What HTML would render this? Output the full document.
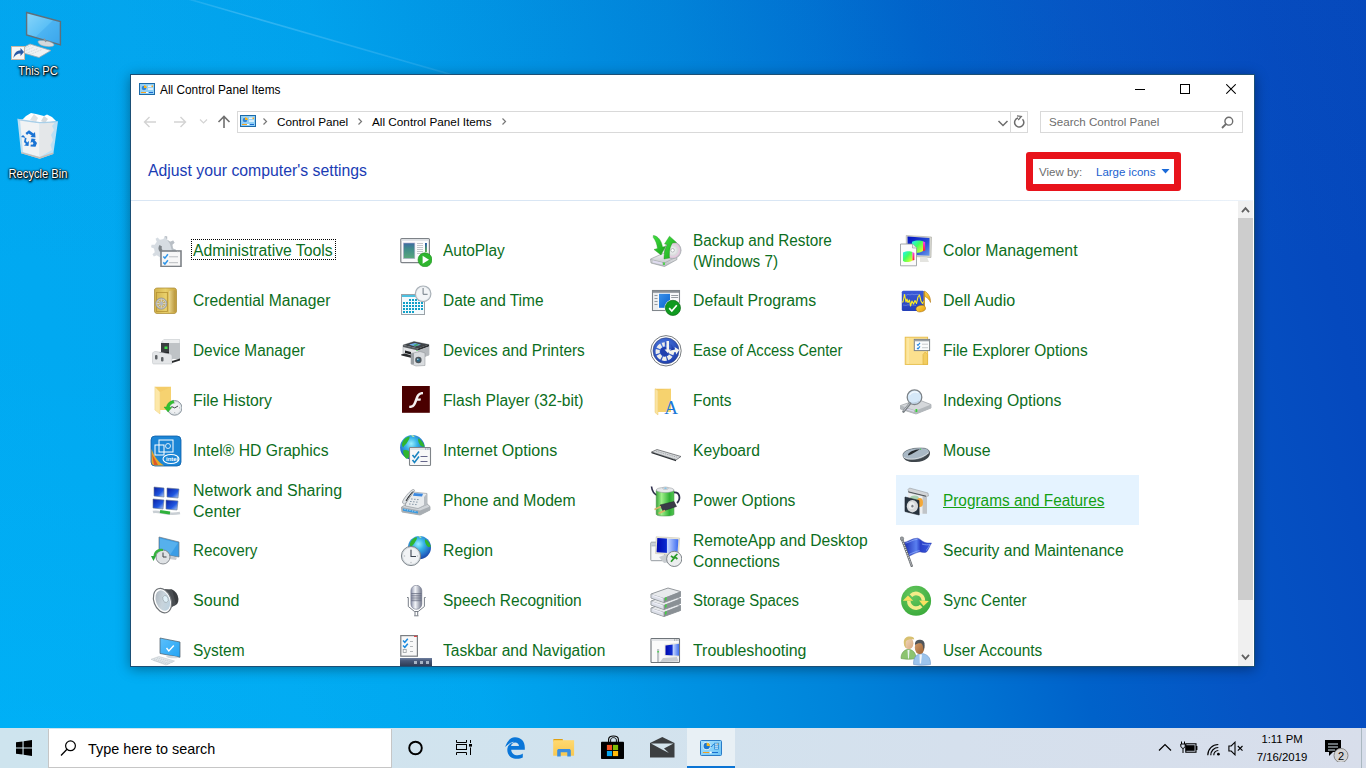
<!DOCTYPE html><html><head><meta charset="utf-8"><title>All Control Panel Items</title><style>
*{margin:0;padding:0;box-sizing:border-box}
html,body{width:1366px;height:768px;overflow:hidden}
body{position:relative;font-family:"Liberation Sans", sans-serif;background:#0a78d8}
.a{position:absolute;display:block}
.t{position:absolute;white-space:nowrap}
#bg{position:absolute;left:0;top:0;width:1366px;height:768px;
background:radial-gradient(ellipse 700px 420px at 0% 100%, rgba(0,190,255,0.32), rgba(0,190,255,0) 100%),linear-gradient(180deg, rgba(20,120,200,0.06) 0%, rgba(20,120,200,0) 35%),linear-gradient(76deg,#00aaf2 0%,#02a8f0 20%,#00a4ee 32%,#0094e4 44%,#0084da 55%,#0072d2 64%,#0062ca 71%,#0554c4 81%,#0549be 93%,#0546bb 100%);}
.dl{position:absolute;text-align:center;color:#fff;font-size:12px;line-height:14px;transform:scaleX(0.93);text-shadow:0 0 1px #000,0 0 2px #000,1px 1px 2px #000,0 1px 3px #000}
#win{position:absolute;left:130px;top:74px;width:1125px;height:593px;background:#fff;border:1px solid #1b4f76;box-shadow:0 2px 12px rgba(0,0,0,.38)}
#clip{position:absolute;left:131px;top:201px;width:1106px;height:465px;overflow:hidden}
.it{position:absolute;width:243px;height:50px}
.lb{position:absolute;left:46.5px;white-space:nowrap;font-size:16px;line-height:21px;color:#0c6e21;transform-origin:0 0}
#tb{position:absolute;left:0;top:728px;width:1366px;height:40px;background:linear-gradient(90deg,#cee4ee 0%,#d2e3ee 45%,#d5e0ed 70%,#d8deeb 100%)}
</style></head><body>
<div id="bg"></div>
<svg class="a" style="left:0;top:0" width="700" height="100"><defs><linearGradient id="bm" x1="0" y1="0" x2="1" y2="0"><stop offset="0" stop-color="#fff" stop-opacity="0"/><stop offset="0.3" stop-color="#bfe8ff" stop-opacity="0.25"/><stop offset="1" stop-color="#bfe8ff" stop-opacity="0.1"/></linearGradient></defs><path d="M150 -12 L470 80" stroke="url(#bm)" stroke-width="1.6"/></svg>
<svg class="a" style="left:8px;top:8px" width="56" height="56" viewBox="0 0 56 56">
<defs><linearGradient id="scr" x1="0" y1="0" x2="1" y2="1"><stop offset="0" stop-color="#8ad6fa"/><stop offset="0.5" stop-color="#5cc0f6"/><stop offset="0.52" stop-color="#4cb4f2"/><stop offset="1" stop-color="#3aa6ec"/></linearGradient></defs>
<polygon points="18.6,4.5 52.4,13.5 52.4,36.8 18.6,27" fill="url(#scr)" stroke="#5f6f7a" stroke-width="1.4"/>
<path d="M30 33.5 C30 31 46 33 46 37 C46 40 30 39 30 33.5z" fill="#d4d9dd" stroke="#9aa3aa" stroke-width="0.6"/>
<path d="M36 30.5 L38 34" stroke="#8a949b" stroke-width="1.5"/>
<polygon points="8.5,43 22,36 43,42.5 31,49.5" fill="#eef1f3" stroke="#9ea7ad" stroke-width="0.8"/>
<path d="M12 42.5 L23 37.5 M14.5 44 L26 39 M18 45.5 L30 40.5 M22 46.5 L34 41.5" stroke="#c2c9ce" stroke-width="0.7" stroke-dasharray="1 0.8"/>
<rect x="3.5" y="38.5" width="13" height="13" fill="#f6f6f6" stroke="#c8b8a8"/>
<path d="M5.5 50 C6 45 8.5 42.5 12.5 42.5 L12.5 40 L16 44 L12.5 48 L12.5 45.5 C9.5 45.5 7 47 5.5 50Z" fill="#2a5aa6"/>
</svg>
<svg class="a" style="left:14px;top:110px" width="48" height="52" viewBox="0 0 48 52">
<polygon points="3.4,8.8 25.7,12 44,11.2 39.3,44 25.7,48.7 7.1,43.3" fill="#cfe6f4" opacity="0.9"/>
<polygon points="6,10 25.7,13 25.7,47 9,42" fill="#f1f3f4"/>
<polygon points="25.7,13 41,12.5 38,16 40,20 37,25 39,30 36.5,35 38,40 25.7,47" fill="#e4e7e9"/>
<polygon points="12,6 17,3 22,4 30,6 33,4.5 38,7 42,11 30,13 25,14 18,12 8,10" fill="#ffffff"/>
<polygon points="20,4 24,8 22,12 16,10" fill="#dfe2e4"/>
<polygon points="30,6 34,9 31,13 27,11" fill="#d5d9dc"/>
<polygon points="3.4,8.8 25.7,12 44,11.2 41,12.5 25.7,13.5 5.5,10.5" fill="#a9cfe8"/>
<polygon points="7.1,42 25.7,47 39.3,42.5 39.3,44 25.7,48.7 7.1,43.3" fill="#c8bdb5"/>
<g fill="#1a74d4">
<path d="M11.5 23 L15 20.3 L19.5 23.5 L21 22 L21.5 27.5 L16.5 27 L17.8 25.6 L14.6 23.5 L13 25z"/>
<path d="M8 27 L10 25 L12 27 L11 32 L13 34 L11 35.5 L15.5 36 L16 31 L14.2 32.5 L13 31 L13.5 28z" transform="translate(-1 0)"/>
<path d="M16.5 36.5 L21.5 36.8 L23 33 L20.5 30 L22 29 L17.5 28.5 L16.5 33 L18.2 31.8 L19.5 33.3 L18.5 34.7 L16.8 34.5z"/>
</g>
</svg>
<div class="dl" style="left:0px;top:64px;width:76px">This PC</div>
<div class="dl" style="left:-2px;top:167px;width:80px">Recycle Bin</div>
<div id="win"></div>
<svg class="a" style="left:139px;top:83px" width="16" height="12" viewBox="0 0 16 12">
<rect x="0.5" y="0.5" width="15" height="11" fill="#8fd0f6" stroke="#1d6aa8"/>
<circle cx="5" cy="5" r="2.8" fill="#2f86d6" stroke="#d8eefc" stroke-width="0.6"/>
<path d="M5 5 L5 2.2 A2.8 2.8 0 0 1 7.8 5z" fill="#f7b21e"/>
<rect x="9" y="2.5" width="5" height="1.6" fill="#e8f5fd"/><rect x="9" y="5.2" width="5" height="1.6" fill="#e8f5fd"/>
<rect x="12.5" y="2.5" width="1.5" height="1.6" fill="#f7a21e"/>
<rect x="2" y="9" width="5" height="1" fill="#f7a21e"/><rect x="7" y="9" width="2" height="1" fill="#fff"/><rect x="10" y="9" width="4" height="1" fill="#1d6ad0"/>
</svg>
<div class="t" style="left:160px;top:81.89px;font-size:11.85px;line-height:16px;color:#000">All Control Panel Items</div>
<div class="a" style="left:1135px;top:89px;width:10px;height:1px;background:#000"></div>
<div class="a" style="left:1180px;top:84px;width:10px;height:10px;border:1px solid #000"></div>
<svg class="a" style="left:1226px;top:84px" width="10" height="10" viewBox="0 0 10 10"><path d="M0.3 0.3 L9.7 9.7 M9.7 0.3 L0.3 9.7" stroke="#000" stroke-width="1.05"/></svg>
<svg class="a" style="left:142px;top:114px" width="16" height="16" viewBox="0 0 16 16"><path d="M2.5 8 H14 M7.5 3 L2.5 8 L7.5 13" stroke="#d3d3d3" stroke-width="1.4" fill="none"/></svg>
<svg class="a" style="left:172px;top:114px" width="16" height="16" viewBox="0 0 16 16"><path d="M2 8 H13.5 M8.5 3 L13.5 8 L8.5 13" stroke="#d3d3d3" stroke-width="1.4" fill="none"/></svg>
<svg class="a" style="left:199px;top:117px" width="9" height="8" viewBox="0 0 9 8"><path d="M1 2.5 L4.5 6 L8 2.5" stroke="#d3d3d3" stroke-width="1.1" fill="none"/></svg>
<svg class="a" style="left:216px;top:114px" width="16" height="16" viewBox="0 0 16 16"><path d="M8 14 V2.5 M2.5 8 L8 2.5 L13.5 8" stroke="#707070" stroke-width="1.6" fill="none"/></svg>
<div class="a" style="left:237px;top:111px;width:791px;height:22px;border:1px solid #d9d9d9"></div>
<div class="a" style="left:1010px;top:112px;width:1px;height:20px;background:#d9d9d9"></div>
<svg class="a" style="left:240px;top:115px" width="16" height="12" viewBox="0 0 16 12">
<rect x="0.5" y="0.5" width="15" height="11" fill="#8fd0f6" stroke="#1d6aa8"/>
<circle cx="5" cy="5" r="2.8" fill="#2f86d6" stroke="#d8eefc" stroke-width="0.6"/>
<path d="M5 5 L5 2.2 A2.8 2.8 0 0 1 7.8 5z" fill="#f7b21e"/>
<rect x="9" y="2.5" width="5" height="1.6" fill="#e8f5fd"/><rect x="9" y="5.2" width="5" height="1.6" fill="#e8f5fd"/>
<rect x="12.5" y="2.5" width="1.5" height="1.6" fill="#f7a21e"/>
<rect x="2" y="9" width="5" height="1" fill="#f7a21e"/><rect x="7" y="9" width="2" height="1" fill="#fff"/><rect x="10" y="9" width="4" height="1" fill="#1d6ad0"/>
</svg>
<svg class="a" style="left:261px;top:117px" width="8" height="9" viewBox="0 0 8 9"><path d="M2.5 1.5 L5.5 4.5 L2.5 7.5" stroke="#777" stroke-width="1.2" fill="none"/></svg>
<div class="t" style="left:277px;top:113.93px;font-size:11.75px;line-height:16px;color:#000">Control Panel</div>
<svg class="a" style="left:356px;top:117px" width="8" height="9" viewBox="0 0 8 9"><path d="M2.5 1.5 L5.5 4.5 L2.5 7.5" stroke="#777" stroke-width="1.2" fill="none"/></svg>
<div class="t" style="left:372px;top:113.93px;font-size:11.75px;line-height:16px;color:#000">All Control Panel Items</div>
<svg class="a" style="left:500px;top:117px" width="8" height="9" viewBox="0 0 8 9"><path d="M2.5 1.5 L5.5 4.5 L2.5 7.5" stroke="#777" stroke-width="1.2" fill="none"/></svg>
<svg class="a" style="left:997px;top:119px" width="12" height="9" viewBox="0 0 12 9"><path d="M1.5 2 L6 6.5 L10.5 2" stroke="#6d6d6d" stroke-width="1.5" fill="none"/></svg>
<svg class="a" style="left:1013px;top:115px" width="14" height="14" viewBox="0 0 14 14"><path d="M9.5 4.2 A4.6 4.6 0 1 1 5 3" stroke="#6d6d6d" stroke-width="1.5" fill="none"/><path d="M4 0.8 L8.3 1.4 L5.2 5" stroke="#6d6d6d" stroke-width="1.3" fill="none"/></svg>
<div class="a" style="left:1040px;top:111px;width:203px;height:22px;border:1px solid #d9d9d9"></div>
<div class="t" style="left:1049px;top:113.98px;font-size:11.6px;line-height:16px;color:#6d6d6d">Search Control Panel</div>
<svg class="a" style="left:1220px;top:115px" width="15" height="15" viewBox="0 0 15 15"><circle cx="8.8" cy="6.2" r="3.9" stroke="#6d6d6d" stroke-width="1.4" fill="none"/><path d="M6 9 L2 13" stroke="#6d6d6d" stroke-width="1.8"/></svg>
<div class="t" style="left:148px;top:160.53px;font-size:15.8px;line-height:20px;color:#1a3cb4">Adjust your computer's settings</div>
<div class="a" style="left:1026px;top:152px;width:155px;height:39px;border:7px solid #e8131b;border-radius:3px"></div>
<div class="t" style="left:1039px;top:163.62px;font-size:11.5px;line-height:16px;color:#6d6d6d">View by:</div>
<div class="t" style="left:1096px;top:163.62px;font-size:11.5px;line-height:16px;color:#1a5fd0">Large icons</div>
<svg class="a" style="left:1161px;top:169px" width="9" height="5" viewBox="0 0 9 5"><path d="M0.5 0 L8.5 0 L4.5 4.5z" fill="#1a6ad8"/></svg>
<div class="a" style="left:131px;top:200px;width:1122px;height:1px;background:linear-gradient(90deg,#d9e6f4,#d9e6f4 90%,#eef4fa)"></div>
<div class="a" style="left:1238px;top:201px;width:15px;height:465px;background:#f0f0f0"></div>
<div class="a" style="left:1238px;top:218px;width:15px;height:382px;background:#cdcdcd"></div>
<svg class="a" style="left:1241px;top:206px" width="9" height="8" viewBox="0 0 9 8"><path d="M1 6.2 L4.5 2.2 L8 6.2" stroke="#606060" stroke-width="1.8" fill="none"/></svg>
<svg class="a" style="left:1241px;top:653px" width="9" height="8" viewBox="0 0 9 8"><path d="M1 1.8 L4.5 5.8 L8 1.8" stroke="#606060" stroke-width="1.8" fill="none"/></svg>
<div id="clip">
<div class="it" style="left:15px;top:24px;"><svg class="a" style="left:4px;top:10px" width="32" height="32" viewBox="0 0 32 32">
<path d="M13.50 4.00 L14.68 1.06 L17.18 1.55 L17.14 4.72 L20.22 6.78 L23.13 5.53 L24.55 7.65 L22.28 9.86 L23.00 13.50 L25.94 14.68 L25.45 17.18 L22.28 17.14 L20.22 20.22 L21.47 23.13 L19.35 24.55 L17.14 22.28 L13.50 23.00 L12.32 25.94 L9.82 25.45 L9.86 22.28 L6.78 20.22 L3.87 21.47 L2.45 19.35 L4.72 17.14 L4.00 13.50 L1.06 12.32 L1.55 9.82 L4.72 9.86 L6.78 6.78 L5.53 3.87 L7.65 2.45 L9.86 4.72z" fill="#d6dce2"/>
<path d="M14.68 1.06 L17.18 1.55 L17.14 4.72 L20.22 6.78 L23.13 5.53 L24.55 7.65 L22.28 9.86 L23.00 13.50 L25.94 14.68 L25.45 17.18 L22 16 L20 9 Z" fill="#b9bfc5"/>
<path d="M9.5 10 C8 12 8 15 10 17 L12.5 15 C11.5 14 11.5 12.5 12 11.5z" fill="#7d8388"/>
<rect x="11" y="16" width="20" height="15.5" fill="#f7f7f7" stroke="#7c8186" stroke-width="1.6"/>
<path d="M27 17 h0.8 M28.7 17 h0.8" stroke="#e0e0e0" stroke-width="0.8"/>
<path d="M13.3 21.5 l1.6 1.6 l3-3.8 M13.3 27.4 l1.6 1.6 l3-3.8" stroke="#2f95e8" stroke-width="1.5" fill="none"/>
<path d="M19 21.8 h9 M19 27.7 h9" stroke="#b2b6ba" stroke-width="0.9"/>
</svg><div class="a" style="left:45px;top:14px;width:145px;height:21px;border:1px dotted #000"></div><div class="lb" style="top:14.96px;transform:scaleX(0.9831);">Administrative Tools</div></div>
<div class="it" style="left:15px;top:74px;"><svg class="a" style="left:4px;top:10px" width="32" height="32" viewBox="0 0 32 32">
<defs><linearGradient id="cr" x1="0" y1="0" x2="1" y2="0"><stop offset="0" stop-color="#d2b24c"/><stop offset="0.5" stop-color="#e8cf6a"/><stop offset="1" stop-color="#c9a540"/></linearGradient>
<linearGradient id="cr2" x1="0" y1="0" x2="1" y2="0"><stop offset="0" stop-color="#e9d58a"/><stop offset="1" stop-color="#b8953a"/></linearGradient></defs>
<path d="M4.5 5 C4.5 3.5 6 3 8 3 L24 3 C25.5 3 26.5 4 26.5 5.5 L26.5 26 C26.5 27.5 25.5 28.5 24 28.5 L7 28.5 C5.5 28.5 4.5 27.5 4.5 26z" fill="url(#cr)" stroke="#a8862e" stroke-width="0.7"/>
<path d="M19 6 L25.5 5 L25.5 27 L19 27.5z" fill="url(#cr2)"/>
<rect x="6.5" y="7.5" width="11" height="19" fill="none" stroke="#b69335" stroke-width="0.8"/>
<circle cx="11.3" cy="18.6" r="5.6" fill="#c3c6c9" stroke="#8c9094" stroke-width="0.8"/>
<circle cx="11.3" cy="18.6" r="4.2" fill="#c9b060"/>
<path d="M11.3 14.4 V22.8 M7.1 18.6 H15.5 M8.3 15.6 L14.3 21.6 M14.3 15.6 L8.3 21.6" stroke="#d7d9db" stroke-width="0.9"/>
<circle cx="11.3" cy="18.6" r="2" fill="#b3b7ba"/>
</svg><div class="lb" style="top:14.96px;transform:scaleX(0.9779);">Credential Manager</div></div>
<div class="it" style="left:15px;top:124px;"><svg class="a" style="left:4px;top:10px" width="32" height="32" viewBox="0 0 32 32">
<polygon points="11,7 14,4 30,4 30,23 11,23" fill="#d9dcde"/>
<polygon points="12,5 29,5 29,8 14,8" fill="#eceeef"/>
<rect x="19" y="8" width="11" height="16" fill="#bfc3c6"/>
<rect x="11" y="8" width="8" height="12" fill="#3a3d40"/>
<rect x="14.5" y="11.5" width="3" height="2.5" fill="#3ee04a"/>
<path d="M8 17 L19 17 L18 20 L8 20z" fill="#1e2022"/>
<path d="M2.5 19 C2.5 17 4 16.5 6 16.5 L20 19 C21.5 19.5 22 20 22 21.5 L22 29 L4 29 C3 29 2.5 28.5 2.5 27.5z" fill="#e4e6e8" stroke="#b8bcc0" stroke-width="0.5"/>
<rect x="5" y="20" width="2.5" height="4.5" rx="1" fill="#606468"/>
<rect x="11" y="22" width="2.5" height="4.5" rx="1" fill="#606468"/>
<path d="M22 26 L30 23.5 L30 25.5 L22 28z" fill="#2a2c2e"/>
</svg><div class="lb" style="top:14.96px;transform:scaleX(0.9621);">Device Manager</div></div>
<div class="it" style="left:15px;top:174px;"><svg class="a" style="left:4px;top:10px" width="32" height="32" viewBox="0 0 32 32">
<path d="M4.9 1.8 L21 1.8 L21 25 L10 25z" fill="#f4cc68"/>
<path d="M4.9 1.8 L10 7 L10 29 L4.9 25z" fill="#fde8a8" stroke="#ecd080" stroke-width="0.5"/>
<path d="M10 7 L21 1.8 L21 25 L10 25" fill="#f8d878" opacity="0.5"/>
<circle cx="24.7" cy="22.9" r="7.3" fill="#dfe4e8" stroke="#8a949c" stroke-width="1"/>
<circle cx="24.7" cy="22.9" r="5.6" fill="#eef0f2"/>
<g stroke="#7a8288" stroke-width="0.6"><path d="M24.7 17.6v1 M24.7 27.2v1 M19.4 22.9h1 M29 22.9h1"/></g>
<path d="M24.7 22.9 L21.5 21.5 M24.7 22.9 L28 21" stroke="#30363a" stroke-width="0.9"/>
<path d="M23.5 15.4 C19.5 16 17 18.5 16.5 22 L14 22 L18 27 L22 22.3 L19.5 22.3 C20 20 21.5 18.5 24 18z" fill="#30c030" stroke="#20a020" stroke-width="0.4"/>
</svg><div class="lb" style="top:14.96px;transform:scaleX(0.9873);">File History</div></div>
<div class="it" style="left:15px;top:224px;"><svg class="a" style="left:4px;top:10px" width="32" height="32" viewBox="0 0 32 32">
<rect x="1" y="1" width="30" height="30" rx="4" fill="#1c86d6" stroke="#0d5ea8" stroke-width="0.8"/>
<path d="M1.5 14 L1.5 27 C1.5 29 3 30.5 5 30.5 L14 30.5 C8 27 4 21 1.5 14z" fill="#e8a82a"/>
<path d="M2 19 L8 30 L4 30z" fill="#d9442a" opacity="0.8"/>
<rect x="9" y="5" width="14" height="12" fill="none" stroke="#fff" stroke-width="1"/>
<rect x="5" y="10" width="9" height="10" fill="none" stroke="#fff" stroke-width="1"/>
<circle cx="18" cy="11" r="2.5" fill="none" stroke="#fff" stroke-width="0.8"/>
<ellipse cx="21" cy="24" rx="8" ry="4.5" fill="none" stroke="#fff" stroke-width="1.1"/>
<text x="16" y="26" font-family="Liberation Sans" font-size="6" fill="#fff" font-weight="bold">intel</text>
</svg><div class="lb" style="top:14.96px;transform:scaleX(0.9818);">Intel® HD Graphics</div></div>
<div class="it" style="left:15px;top:274px;"><svg class="a" style="left:4px;top:10px" width="32" height="32" viewBox="0 0 32 32">
<defs><linearGradient id="nw" x1="0" y1="0" x2="1" y2="1"><stop offset="0" stop-color="#0a1ea0"/><stop offset="0.6" stop-color="#1f56e0"/><stop offset="1" stop-color="#b9d3f6"/></linearGradient></defs>
<g stroke="#6a7890" stroke-width="0.6">
<polygon points="4,2 14,3 14,12 4,11" fill="url(#nw)"/>
<polygon points="17,3 29,4 28,13 17,12" fill="url(#nw)"/>
<polygon points="3,14 14,15 13,24 3,23" fill="url(#nw)"/>
<polygon points="16,15 28,16 27,25 16,24" fill="url(#nw)"/>
</g>
<path d="M3 27 C9 25 16 31 30 28" stroke="#c9cfd4" stroke-width="2.5" fill="none"/>
<path d="M10 26.5 L20 28" stroke="#2fb23a" stroke-width="3"/>
</svg><div class="lb" style="top:4.76px;transform:scaleX(0.9980);">Network and Sharing<br>Center</div></div>
<div class="it" style="left:15px;top:324px;"><svg class="a" style="left:4px;top:10px" width="32" height="32" viewBox="0 0 32 32">
<polygon points="9,2 29,7 29,22 9,19" fill="#3a9de6" stroke="#6c7882" stroke-width="0.7"/>
<polygon points="10,3.5 28,8 20,20 10,18" fill="#69bdf2" opacity="0.6"/>
<polygon points="20,21 27,22.5 26,25 19,24" fill="#c6cbcf"/>
<circle cx="13" cy="22" r="7" fill="#dfe2e5" stroke="#70767b" stroke-width="0.8"/>
<path d="M13 17.5 V22 H16.5" stroke="#3c4044" stroke-width="1" fill="none"/>
<path d="M1 21 L6 21 L3.5 26z" fill="#2aa83a"/>
<path d="M3.5 21 C4 15 9 13 13 14 L13 16 C10 16 6 17 6 21z" fill="#36b23e"/>
</svg><div class="lb" style="top:14.96px;transform:scaleX(0.9522);">Recovery</div></div>
<div class="it" style="left:15px;top:374px;"><svg class="a" style="left:4px;top:10px" width="32" height="32" viewBox="0 0 32 32">
<defs><linearGradient id="sd" x1="0" y1="0" x2="1" y2="1"><stop offset="0" stop-color="#a8b0b8"/><stop offset="0.5" stop-color="#c8d4dc"/><stop offset="1" stop-color="#b8d0e0"/></linearGradient></defs>
<ellipse cx="22.5" cy="12.5" rx="5.5" ry="8.3" fill="#3a3d40" transform="rotate(-20 22.5 12.5)"/>
<path d="M14 4 L22 4.5 L26 19.5 L19 24z" fill="#4a4e52"/>
<ellipse cx="12.5" cy="15.6" rx="8.6" ry="12.6" fill="#ffffff" stroke="#707478" stroke-width="1.2" transform="rotate(-20 12.5 15.6)"/>
<ellipse cx="12.8" cy="15.6" rx="6.8" ry="10.6" fill="url(#sd)" transform="rotate(-20 12.8 15.6)"/>
<ellipse cx="15.5" cy="14" rx="2.6" ry="3.6" fill="#dff0f8" stroke="#8a9298" stroke-width="0.5" transform="rotate(-20 15.5 14)"/>
</svg><div class="lb" style="top:14.96px;transform:scaleX(1.0068);">Sound</div></div>
<div class="it" style="left:15px;top:424px;"><svg class="a" style="left:4px;top:10px" width="32" height="32" viewBox="0 0 32 32">
<defs><linearGradient id="sysg" x1="0" y1="0" x2="1" y2="1"><stop offset="0" stop-color="#5cc0fc"/><stop offset="1" stop-color="#24a4f4"/></linearGradient></defs>
<polygon points="10,3 30,7 30,22.3 10,18.5" fill="url(#sysg)" stroke="#4a5a66" stroke-width="0.7"/>
<path d="M16.5 13 l2.3 3 l5-5.5" stroke="#fff" stroke-width="1.4" fill="none"/>
<path d="M16 21.5 C17 20 27 21 28 22.5 C27 24 17 23.5 16 21.5z" fill="#d4dade"/>
<polygon points="1,24.3 9,21.5 24.5,26 16,30" fill="#e2e7ea" stroke="#b8c0c6" stroke-width="0.5"/>
<path d="M4 24 L20 28.5 M7 23 L23 27.3 M3.5 25.5 L18.5 29.3" stroke="#b6c0c8" stroke-width="0.6" stroke-dasharray="1.2 0.8"/>
</svg><div class="lb" style="top:14.96px;transform:scaleX(0.9673);">System</div></div>
<div class="it" style="left:265px;top:24px;"><svg class="a" style="left:4px;top:10px" width="32" height="32" viewBox="0 0 32 32">
<rect x="0.8" y="3.6" width="28.6" height="24" rx="1" fill="#fbfbfc" stroke="#7d8287" stroke-width="1.2"/>
<rect x="1.5" y="4.3" width="27.2" height="1.6" fill="#dfe2e6"/>
<defs><linearGradient id="ap" x1="0" y1="0" x2="0" y2="1"><stop offset="0" stop-color="#3d6aa0"/><stop offset="0.35" stop-color="#3f8a8c"/><stop offset="1" stop-color="#5aa87a"/></linearGradient></defs>
<rect x="3.4" y="8" width="11.4" height="15.6" fill="url(#ap)" stroke="#b6b0d0" stroke-width="0.6"/>
<path d="M17 8.5h6 M17 10.5h6 M17 12.5h6 M17 14.5h6 M17 16.5h6 M17 18.5h6" stroke="#b5b9bd" stroke-width="0.8"/>
<defs><linearGradient id="apb" x1="0" y1="0" x2="0" y2="1"><stop offset="0" stop-color="#2456a8"/><stop offset="1" stop-color="#5ab04a"/></linearGradient></defs>
<rect x="25" y="8" width="1.9" height="9" fill="url(#apb)"/>
<circle cx="25" cy="24.8" r="7" fill="#2eb52e" stroke="#1f8f1f" stroke-width="0.6"/>
<path d="M22.6 20.8 L29 24.8 L22.6 28.8z" fill="#fff"/>
</svg><div class="lb" style="top:14.96px;transform:scaleX(0.9656);">AutoPlay</div></div>
<div class="it" style="left:265px;top:74px;"><svg class="a" style="left:4px;top:10px" width="32" height="32" viewBox="0 0 32 32">
<rect x="1.5" y="9.5" width="23" height="20" fill="#f4fafd" stroke="#9aa2a8" stroke-width="1"/>
<rect x="2" y="10" width="22" height="2" fill="#4cc0e0"/>
<g fill="#10a0c8"><rect x="9" y="14" width="2" height="2"/><rect x="12" y="14" width="2" height="2"/><rect x="15" y="14" width="2" height="2"/><rect x="18" y="14" width="2" height="2"/><rect x="21" y="14" width="2" height="2"/><rect x="3" y="17" width="2" height="2"/><rect x="6" y="17" width="2" height="2"/><rect x="9" y="17" width="2" height="2"/><rect x="12" y="17" width="2" height="2"/><rect x="15" y="17" width="2" height="2"/><rect x="18" y="17" width="2" height="2"/><rect x="21" y="17" width="2" height="2"/><rect x="3" y="20" width="2" height="2"/><rect x="6" y="20" width="2" height="2"/><rect x="9" y="20" width="2" height="2"/><rect x="12" y="20" width="2" height="2"/><rect x="15" y="20" width="2" height="2"/><rect x="18" y="20" width="2" height="2"/><rect x="21" y="20" width="2" height="2"/><rect x="3" y="23" width="2" height="2"/><rect x="6" y="23" width="2" height="2"/><rect x="9" y="23" width="2" height="2"/><rect x="12" y="23" width="2" height="2"/><rect x="15" y="23" width="2" height="2"/><rect x="18" y="23" width="2" height="2"/><rect x="21" y="23" width="2" height="2"/><rect x="3" y="26" width="2" height="2"/><rect x="6" y="26" width="2" height="2"/><rect x="9" y="26" width="2" height="2"/><rect x="12" y="26" width="2" height="2"/></g>
<circle cx="23.1" cy="8.8" r="7.8" fill="#e8ecef" stroke="#a9b1b8" stroke-width="1.2"/>
<circle cx="23.1" cy="8.8" r="6.4" fill="#f3f5f7"/>
<path d="M23.1 3 V9.3 H27.6" stroke="#6f7a84" stroke-width="1" fill="none"/>
</svg><div class="lb" style="top:14.96px;transform:scaleX(0.9660);">Date and Time</div></div>
<div class="it" style="left:265px;top:124px;"><svg class="a" style="left:4px;top:10px" width="32" height="32" viewBox="0 0 32 32">
<path d="M3 10 L14 6.5 L29 9.5 L29 20 L18 24 L3 20z" fill="#e2e4e6" stroke="#8f9498" stroke-width="0.5"/>
<path d="M3 10 L14 6.5 L29 9.5 L18 13.5z" fill="#3f4347"/>
<path d="M3 10 L18 13.5 L18 15.5 L3 12z" fill="#55595d"/>
<path d="M18 13.5 L29 9.5 L29 11.5 L18 15.5z" fill="#2d3033"/>
<path d="M9 9.5 L15 8 L21 9.8 L15 11.5z" fill="#6fb0f0"/>
<path d="M13 10 L17 9 L19 10 L15 11z" fill="#3aa050"/>
<path d="M18 15.5 L29 11.5 L29 20 L18 24z" fill="#b5b9bd"/>
<rect x="16.5" y="15" width="1" height="1" fill="#3ed04a"/>
<path d="M5 15.5 L11 17 L11 19.5 L5 18z" fill="#1c1e20"/>
<path d="M1 19.5 L5 18.5 L13 21 L12 23 L1.5 20.5z" fill="#2a2c2e"/>
<path d="M11 18.5 L20 16.5 L25 18 L25 30.5 L16 31 L11 29z" fill="#d9dcdf" stroke="#8a8f93" stroke-width="0.5"/>
<path d="M11 18.5 L14 18 L14 29.5 L11 29z" fill="#9a9fa3"/>
<circle cx="18.4" cy="25" r="3.2" fill="#50575c"/>
<circle cx="18.4" cy="25" r="1.8" fill="#2a6a8a"/>
<circle cx="17.8" cy="24.3" r="0.7" fill="#cfe8f0"/>
</svg><div class="lb" style="top:14.96px;transform:scaleX(0.9603);">Devices and Printers</div></div>
<div class="it" style="left:265px;top:174px;"><svg class="a" style="left:4px;top:10px" width="32" height="32" viewBox="0 0 32 32">
<rect x="2" y="1" width="27.8" height="26.8" fill="#4a0000"/>
<path d="M23 7 C18.5 7 16.8 9.5 15.5 13 L14 17 C13 19.8 11.8 20.8 9.2 20.8 L9.2 23 C13.5 23.2 15.2 21 16.5 17.5 L17.2 15.8 L20.5 15.8 L21 13.5 L18 13.5 C18.8 10.8 20 9.5 23 9.3z" fill="#f4f0f0"/>
</svg><div class="lb" style="top:14.96px;transform:scaleX(0.9754);">Flash Player (32-bit)</div></div>
<div class="it" style="left:265px;top:224px;"><svg class="a" style="left:4px;top:10px" width="32" height="32" viewBox="0 0 32 32"><defs><radialGradient id="GLi" cx="0.45" cy="0.35" r="0.7"><stop offset="0" stop-color="#9af0ff"/><stop offset="0.35" stop-color="#38b4e8"/><stop offset="0.8" stop-color="#1f5fc0"/><stop offset="1" stop-color="#1a3f9a"/></radialGradient></defs>
<circle cx="12.4" cy="12.4" r="12.3" fill="url(#GLi)"/>
<g transform="translate(12.4 12.4) scale(1.0250000000000001)" fill="#2fb52f">
<path d="M-10 -4 C-9 -8 -6 -10 -3 -11 C-2 -9 -4 -7 -5 -5 C-6 -3 -8 -2 -9 0 C-10 -1 -10.5 -2.5 -10 -4z"/>
<path d="M-9 3 C-6 2 -3 3 -2 6 C-2 9 -4 11 -6 11 C-8 9 -9.5 6 -9 3z"/>
<path d="M6 -9 C9 -7 11 -4 12 -1 C10 0 8 -1 7 -3 C6 -5 5 -7 6 -9z"/>
<path d="M-1 -12 C1 -12 2 -11 2 -10 C0 -10 -1 -11 -1 -12z" fill="#c8f0a0"/>
</g>
<rect x="9.5" y="12.5" width="21" height="18" rx="0.8" fill="#f8f8f8" stroke="#7f8489" stroke-width="1.1"/>
<rect x="10.2" y="13.2" width="19.6" height="1.6" fill="#dde0e3"/>
<path d="M25 14 h0.8 M26.8 14 h0.8 M28.6 14 h0.8" stroke="#3a5a9a" stroke-width="0.8"/>
<path d="M12.5 20 l2 2.5 l4.5-6 M12.5 25 l2 2.5 l4.5-6" stroke="#1a84c0" stroke-width="1.6" fill="none"/>
<path d="M20.5 21.5h7 M20.5 26.5h7" stroke="#65668a" stroke-width="1.2"/>
</svg><div class="lb" style="top:14.96px;transform:scaleX(1.0027);">Internet Options</div></div>
<div class="it" style="left:265px;top:274px;"><svg class="a" style="left:4px;top:10px" width="32" height="32" viewBox="0 0 32 32">
<path d="M1.5 22 L6 19.5 L25 17 L30 21.5 L30 25 L20 30 L2 27z" fill="#d0d4d8" stroke="#80868b" stroke-width="0.6"/>
<path d="M1.5 22 L20 25.5 L30 21.5 L30 25 L20 30 L2 27z" fill="#a8aeb3"/>
<path d="M3 23.5 L18 26.5 L18 28.5 L3 25.8z" fill="#3a9ae0"/>
<path d="M4.5 24.5 h1 M7 25 h1 M9.5 25.5 h1 M12 26 h1 M14.5 26.5 h1" stroke="#d8f0ff" stroke-width="0.7"/>
<path d="M5.5 19 L13 7 L27 8.5 L27 19.5 L18 23.5 L5.5 21z" fill="#e8ebed" stroke="#8a9095" stroke-width="0.6"/>
<path d="M18 23.5 L27 19.5 L27 8.5 L24 12 L24 20z" fill="#b8bdc2"/>
<path d="M14 8 L23 8.8 L22 11.5 L13 10.8z" fill="#3a88e0"/>
<g fill="#8a9aa8"><rect x="11" y="13.5" width="1.6" height="1"/><rect x="14" y="13.8" width="1.6" height="1"/><rect x="17" y="14.1" width="1.6" height="1"/><rect x="10" y="16" width="1.6" height="1"/><rect x="13" y="16.3" width="1.6" height="1"/><rect x="16" y="16.6" width="1.6" height="1"/><rect x="9" y="18.5" width="1.6" height="1"/><rect x="12" y="18.8" width="1.6" height="1"/><rect x="15" y="19.1" width="1.6" height="1"/></g>
<path d="M2.5 17 C3 14 9 7 12 5 C13 4.2 14.5 4.5 14.5 5.5 C14 7 8 14 5.5 18.5 C4.5 19.5 2.5 19 2.5 17z" fill="#dfe3e6" stroke="#7a8085" stroke-width="0.6"/>
<path d="M6 16 C8 12 11 8.5 13 6.5" stroke="#2a2e32" stroke-width="1"/>
</svg><div class="lb" style="top:14.96px;transform:scaleX(0.9813);">Phone and Modem</div></div>
<div class="it" style="left:265px;top:324px;"><svg class="a" style="left:4px;top:10px" width="32" height="32" viewBox="0 0 32 32"><defs><radialGradient id="GLr" cx="0.45" cy="0.35" r="0.7"><stop offset="0" stop-color="#9af0ff"/><stop offset="0.35" stop-color="#38b4e8"/><stop offset="0.8" stop-color="#1f5fc0"/><stop offset="1" stop-color="#1a3f9a"/></radialGradient></defs>
<circle cx="19.5" cy="12.5" r="11.5" fill="url(#GLr)"/>
<g transform="translate(19.5 12.5) scale(0.9583333333333334)" fill="#2fb52f">
<path d="M-10 -4 C-9 -8 -6 -10 -3 -11 C-2 -9 -4 -7 -5 -5 C-6 -3 -8 -2 -9 0 C-10 -1 -10.5 -2.5 -10 -4z"/>
<path d="M-9 3 C-6 2 -3 3 -2 6 C-2 9 -4 11 -6 11 C-8 9 -9.5 6 -9 3z"/>
<path d="M6 -9 C9 -7 11 -4 12 -1 C10 0 8 -1 7 -3 C6 -5 5 -7 6 -9z"/>
<path d="M-1 -12 C1 -12 2 -11 2 -10 C0 -10 -1 -11 -1 -12z" fill="#c8f0a0"/>
</g>
<circle cx="11" cy="21" r="9.6" fill="#d9dee2" stroke="#7e868c" stroke-width="1"/>
<circle cx="11" cy="21" r="8" fill="#f1f3f5"/>
<g stroke="#8a9298" stroke-width="0.7"><path d="M11 13.8 v1.3 M11 26.9 v1.3 M3.8 21 h1.3 M16.9 21 h1.3"/></g>
<path d="M11 15 V21.5 H16" stroke="#3c4450" stroke-width="1.1" fill="none"/>
</svg><div class="lb" style="top:14.96px;transform:scaleX(0.9857);">Region</div></div>
<div class="it" style="left:265px;top:374px;"><svg class="a" style="left:4px;top:10px" width="32" height="32" viewBox="0 0 32 32">
<defs><linearGradient id="mic" x1="0" y1="0" x2="1" y2="0"><stop offset="0" stop-color="#8a90a8"/><stop offset="0.4" stop-color="#f4f6fa"/><stop offset="1" stop-color="#70768a"/></linearGradient></defs>
<rect x="10.9" y="0.3" width="10.9" height="24" rx="5.4" fill="url(#mic)" stroke="#70768a" stroke-width="0.6"/>
<path d="M11.2 8.5h10.3 M11.2 10.3h10.3 M11.2 12.1h10.3 M11.2 13.9h10.3 M11.2 15.7h10.3" stroke="#60667a" stroke-width="0.7"/>
<path d="M7 12.5 H8.3 V21.5 L14.5 26.5 H18.2 L24.4 21.5 V12.5 H25.7" stroke="#6a707a" stroke-width="0.9" fill="none"/>
<path d="M15 26.5 V30.5 M17.7 26.5 V30.5 M14.2 30.8 H18.5" stroke="#6a707a" stroke-width="0.9"/>
</svg><div class="lb" style="top:14.96px;transform:scaleX(0.9681);">Speech Recognition</div></div>
<div class="it" style="left:265px;top:424px;"><svg class="a" style="left:4px;top:10px" width="32" height="32" viewBox="0 0 32 32">
<rect x="0.8" y="0.6" width="16.6" height="20.6" fill="#f8f8f8" stroke="#7a7e82" stroke-width="1.2"/>
<rect x="14" y="0.8" width="3" height="1.2" fill="#e04848"/>
<path d="M3 5.5 l1.8 1.8 l3-3.6 M3 10.5 l1.8 1.8 l3-3.6" stroke="#1a8ae0" stroke-width="1.5" fill="none"/>
<rect x="3.2" y="14.5" width="3" height="3" fill="none" stroke="#9a9ea2" stroke-width="0.8"/>
<path d="M10 6.5h3 M10 11.5h3 M10 16.5h3" stroke="#a0a4a8" stroke-width="0.8"/>
<defs><linearGradient id="tbb" x1="0" y1="0" x2="0" y2="1"><stop offset="0" stop-color="#7080a0"/><stop offset="0.3" stop-color="#485878"/><stop offset="1" stop-color="#2a3650"/></linearGradient></defs>
<rect x="0" y="23" width="32" height="9" fill="url(#tbb)"/>
<g fill="#a8b4c4"><rect x="14" y="26" width="3" height="3"/><rect x="20" y="26" width="3" height="3"/><rect x="26" y="26" width="3" height="3"/></g>
</svg><div class="lb" style="top:14.96px;transform:scaleX(0.9705);">Taskbar and Navigation</div></div>
<div class="it" style="left:515px;top:24px;"><svg class="a" style="left:4px;top:10px" width="32" height="32" viewBox="0 0 32 32">
<defs><linearGradient id="bkd" x1="0" y1="0" x2="0" y2="1"><stop offset="0" stop-color="#f4f4f6"/><stop offset="1" stop-color="#b8bcc0"/></linearGradient>
<radialGradient id="bkc" cx="0.5" cy="0.5" r="0.5"><stop offset="0" stop-color="#ffffff"/><stop offset="0.6" stop-color="#d8dadc"/><stop offset="0.8" stop-color="#e8c8e0"/><stop offset="1" stop-color="#b8bcc0"/></radialGradient>
<linearGradient id="bka" x1="0" y1="0" x2="1" y2="1"><stop offset="0" stop-color="#40e040"/><stop offset="1" stop-color="#18a018"/></linearGradient></defs>
<path d="M0.5 24 L14 18 L26.5 21 L27 24.5 L14.5 31.5 L1 28z" fill="url(#bkd)" stroke="#8a8f94" stroke-width="0.6"/>
<path d="M1 24.5 L14.5 28 L26.8 21.5" stroke="#9a9ea2" stroke-width="0.6" fill="none"/>
<path d="M3 25.5 L12 27.5 L12 29.5 L3 27.5z" fill="#e0dcf0"/>
<rect x="13.2" y="27.4" width="1.6" height="2.6" fill="#38d038"/>
<circle cx="22.6" cy="15.3" r="8.5" fill="url(#bkc)" stroke="#9aa0a5" stroke-width="0.6"/>
<circle cx="22.6" cy="15.3" r="1.8" fill="#ffffff" stroke="#8a9096" stroke-width="0.6"/>
<path d="M3.3 0.5 C8 1 11.5 5.5 12.5 12 L15.5 11.5 L11 20 L4 14.5 L7.5 13.5 C7 9 5.5 5 3.3 2.5z" fill="url(#bka)" stroke="#20901e" stroke-width="0.4"/>
<path d="M14 24 C14 18 15 13 17.5 9.5 L14.5 9 L19.5 1.2 L26.5 7.5 L22.5 8 C20 11 19 17 19.5 23z" fill="url(#bka)" stroke="#20901e" stroke-width="0.4"/>
</svg><div class="lb" style="top:4.76px;transform:scaleX(0.9573);">Backup and Restore<br>(Windows 7)</div></div>
<div class="it" style="left:515px;top:74px;"><svg class="a" style="left:4px;top:10px" width="32" height="32" viewBox="0 0 32 32">
<rect x="2.5" y="5.5" width="27" height="20" fill="#f8f9fa" stroke="#80868b" stroke-width="1.1"/>
<rect x="3" y="6" width="26" height="1.8" fill="#8a9096"/>
<rect x="3" y="8" width="5" height="17" fill="#eceef0"/>
<path d="M4.5 10.5h3 M4.5 13.5h3 M4.5 16.5h3 M4.5 19.5h3" stroke="#8a9096" stroke-width="0.9"/>
<defs><linearGradient id="dpg" x1="0" y1="0" x2="1" y2="1"><stop offset="0" stop-color="#3a90e8"/><stop offset="1" stop-color="#0a64d0"/></linearGradient></defs>
<rect x="9" y="8.8" width="11" height="14" fill="url(#dpg)"/>
<path d="M21.2 10.5h7 M21.2 12.5h7" stroke="#8a9096" stroke-width="0.9"/>
<circle cx="22.9" cy="22.9" r="8.4" fill="#ffffff"/>
<circle cx="22.9" cy="22.9" r="7.6" fill="#109a20" stroke="#0a6a14" stroke-width="0.7"/>
<path d="M19.2 23.2 l2.6 2.8 l5-5.8" stroke="#fff" stroke-width="1.7" fill="none"/>
</svg><div class="lb" style="top:14.96px;transform:scaleX(0.9894);">Default Programs</div></div>
<div class="it" style="left:515px;top:124px;"><svg class="a" style="left:4px;top:10px" width="32" height="32" viewBox="0 0 32 32">
<defs><radialGradient id="ea" cx="0.4" cy="0.3" r="0.8"><stop offset="0" stop-color="#4a78e0"/><stop offset="1" stop-color="#1a3aa8"/></radialGradient></defs>
<circle cx="16" cy="15.8" r="15.2" fill="#ffffff" stroke="#6a6e72" stroke-width="0.9"/>
<circle cx="16" cy="15.8" r="13" fill="url(#ea)" stroke="#3a4a7a" stroke-width="0.6"/>
<circle cx="14.8" cy="16.6" r="7.2" fill="none" stroke="#eeeeea" stroke-width="4.2" stroke-dasharray="4.2 1.2" transform="rotate(-10 14.8 16.6)"/>
<path d="M22 16.6 A7.2 7.2 0 0 0 14.8 9.4" stroke="url(#ea)" stroke-width="5" fill="none"/>
<circle cx="14.8" cy="16.6" r="4.6" fill="#1f3fae"/>
<path d="M16.5 6 L19 6 L19 14.5 L21 14.5 L17.7 18 L14.5 14.5 L16.5 14.5z" fill="#f4f4f0"/>
<path d="M18.5 16 L25.5 16 L25.5 13.5 L29.5 17.2 L25.5 21 L25.5 18.5 L18.5 18.5z" fill="#f4f4f0" transform="rotate(-12 18.5 17)"/>
</svg><div class="lb" style="top:14.96px;transform:scaleX(0.9236);">Ease of Access Center</div></div>
<div class="it" style="left:515px;top:174px;"><svg class="a" style="left:4px;top:10px" width="32" height="32" viewBox="0 0 32 32">
<path d="M5 3.8 L21 3.8 L21 27 L8 27z" fill="#f2c860"/>
<path d="M5 3.8 L8 5.5 L8 30 L5 27.5z" fill="#fbe4a0" stroke="#e8c870" stroke-width="0.5"/>
<path d="M8 5.5 L21 3.8 L21 27 L8 27" fill="#f8d878" opacity="0.6"/>
<text x="21" y="29" font-family="Liberation Serif" font-size="19" fill="#1a78d8" text-anchor="middle">A</text>
</svg><div class="lb" style="top:14.96px;transform:scaleX(0.9641);">Fonts</div></div>
<div class="it" style="left:515px;top:224px;"><svg class="a" style="left:4px;top:10px" width="32" height="32" viewBox="0 0 32 32">
<polygon points="1.5,17 7,14.5 31,21.5 26,25" fill="#d8dadc" stroke="#3a3e42" stroke-width="0.6"/>
<path d="M6 16.2 L28 22.5 M4 18 L26 24.3" stroke="#9aa0a5" stroke-width="0.8" stroke-dasharray="1.4 0.9"/>
<polygon points="1.5,17 26,25 26,26.2 1.5,18.2" fill="#2e3236"/>
</svg><div class="lb" style="top:14.96px;transform:scaleX(0.9776);">Keyboard</div></div>
<div class="it" style="left:515px;top:274px;"><svg class="a" style="left:4px;top:10px" width="32" height="32" viewBox="0 0 32 32">
<defs><linearGradient id="pw" x1="0" y1="0" x2="1" y2="0"><stop offset="0" stop-color="#3aa63a"/><stop offset="0.3" stop-color="#9ef08a"/><stop offset="0.75" stop-color="#2fb035"/><stop offset="1" stop-color="#55c455"/></linearGradient></defs>
<path d="M1.5 1.5 C2 6 4 9 7.5 10.5" stroke="#2c2d4a" stroke-width="1.6" fill="none"/>
<path d="M6.2 5.5 L24 5.5 L24 29 C24 30.5 21 31 15 31 C9 31 6.2 30.5 6.2 29z" fill="url(#pw)" stroke="#4a8a4a" stroke-width="0.5"/>
<ellipse cx="15.1" cy="5" rx="8.9" ry="2.6" fill="#e6e8ea" stroke="#9aa0a5" stroke-width="0.6"/>
<ellipse cx="15.5" cy="3.2" rx="3" ry="1.3" fill="#d6dade" stroke="#9aa0a5" stroke-width="0.4"/>
<ellipse cx="15.5" cy="3.2" rx="1.2" ry="0.6" fill="#6ac0f0"/>
<path d="M24 7.5 C30 7 31 14 27 18" stroke="#2c2d4a" stroke-width="1.8" fill="none"/>
<path d="M10 20 L24 16.5 L26.5 21.5 L13 26z" fill="#3a3b48" stroke="#22232c" stroke-width="0.5"/>
<path d="M4.5 24.5 L11 21.5 M8.5 28.5 L15 25.5" stroke="#d8b468" stroke-width="1.6"/>
</svg><div class="lb" style="top:14.96px;transform:scaleX(0.9760);">Power Options</div></div>
<div class="it" style="left:515px;top:324px;"><svg class="a" style="left:4px;top:10px" width="32" height="32" viewBox="0 0 32 32">
<rect x="0.8" y="7.2" width="14" height="18.5" rx="0.8" fill="#f6f7f8" stroke="#8a9096" stroke-width="0.9"/>
<path d="M1.5 9h12 M1.5 10.8h12" stroke="#8a98a8" stroke-width="0.8"/>
<path d="M9 22 L17 19 L22 27 L14 28z" fill="#c8ccd0"/>
<defs><linearGradient id="rmg" x1="0" y1="0" x2="1" y2="0"><stop offset="0" stop-color="#0008b0"/><stop offset="0.45" stop-color="#0a2ad0"/><stop offset="0.5" stop-color="#c8d8ff"/><stop offset="1" stop-color="#3a6af0"/></linearGradient></defs>
<path d="M6.2 1.8 L29.6 3 L28.5 20 L5.5 18.5z" fill="#eeeadc" stroke="#c8c4b0" stroke-width="0.6"/>
<path d="M7.3 3 L28.4 4.2 L27.5 18.5 L6.6 17.3z" fill="url(#rmg)"/>
<circle cx="24.2" cy="23.9" r="7.6" fill="#eceeef" stroke="#80868b" stroke-width="1"/>
<path d="M21 20.8 L24 23.4 L21 26.8 M27.4 19 L24.6 21.6 L27.4 24" stroke="#2a9a2a" stroke-width="1.7" fill="none"/>
</svg><div class="lb" style="top:4.76px;transform:scaleX(0.9768);">RemoteApp and Desktop<br>Connections</div></div>
<div class="it" style="left:515px;top:374px;"><svg class="a" style="left:4px;top:10px" width="32" height="32" viewBox="0 0 32 32"><g transform="translate(0 14)">
<path d="M1 9 L18 3 L30.5 6.5 L30.5 11.5 L14 17.5 L1 13z" fill="#e8eaec" stroke="#6a7075" stroke-width="0.7"/>
<path d="M1 9 L14 13 L30.5 6.5 L30.5 11.5 L14 17.5 L1 13z" fill="#9ea4a9"/>
<path d="M1.5 9.5 L13.5 13.2 L13.5 17 L1.5 12.8z" fill="#dcdfe8"/>
<path d="M14 13 L30.5 6.5 L30.5 11.5 L14 17.5z" fill="#8a9095"/>
<path d="M3 10.5 L12 13.5" stroke="#f8f8ff" stroke-width="0.8"/>
<rect x="15" y="12.6" width="1.6" height="3" fill="#40d040" transform="skewY(-20) translate(0 5.5)"/>
</g><g transform="translate(0 7)">
<path d="M1 9 L18 3 L30.5 6.5 L30.5 11.5 L14 17.5 L1 13z" fill="#e8eaec" stroke="#6a7075" stroke-width="0.7"/>
<path d="M1 9 L14 13 L30.5 6.5 L30.5 11.5 L14 17.5 L1 13z" fill="#9ea4a9"/>
<path d="M1.5 9.5 L13.5 13.2 L13.5 17 L1.5 12.8z" fill="#dcdfe8"/>
<path d="M14 13 L30.5 6.5 L30.5 11.5 L14 17.5z" fill="#8a9095"/>
<path d="M3 10.5 L12 13.5" stroke="#f8f8ff" stroke-width="0.8"/>
<rect x="15" y="12.6" width="1.6" height="3" fill="#40d040" transform="skewY(-20) translate(0 5.5)"/>
</g><g transform="translate(0 0)">
<path d="M1 9 L18 3 L30.5 6.5 L30.5 11.5 L14 17.5 L1 13z" fill="#e8eaec" stroke="#6a7075" stroke-width="0.7"/>
<path d="M1 9 L14 13 L30.5 6.5 L30.5 11.5 L14 17.5 L1 13z" fill="#9ea4a9"/>
<path d="M1.5 9.5 L13.5 13.2 L13.5 17 L1.5 12.8z" fill="#dcdfe8"/>
<path d="M14 13 L30.5 6.5 L30.5 11.5 L14 17.5z" fill="#8a9095"/>
<path d="M3 10.5 L12 13.5" stroke="#f8f8ff" stroke-width="0.8"/>
<rect x="15" y="12.6" width="1.6" height="3" fill="#40d040" transform="skewY(-20) translate(0 5.5)"/>
</g></svg><div class="lb" style="top:14.96px;transform:scaleX(0.9304);">Storage Spaces</div></div>
<div class="it" style="left:515px;top:424px;"><svg class="a" style="left:4px;top:10px" width="32" height="32" viewBox="0 0 32 32">
<rect x="1" y="3.5" width="28.5" height="24" rx="0.8" fill="#fafafa" stroke="#6e7479" stroke-width="1.1"/>
<rect x="1.6" y="4.1" width="27.3" height="1.8" fill="#dfe2e5"/>
<path d="M24 5 h0.8 M25.8 5 h0.8 M27.6 5 h0.8" stroke="#50565c" stroke-width="0.8"/>
<path d="M13 23 L27 22 L28.5 26.5 L10 27z" fill="#c8ccd0"/>
<defs><linearGradient id="trg" x1="0" y1="0" x2="1" y2="0"><stop offset="0" stop-color="#0008b0"/><stop offset="0.5" stop-color="#1030d0"/><stop offset="0.55" stop-color="#c8d8ff"/><stop offset="1" stop-color="#4070f0"/></linearGradient></defs>
<path d="M14.5 9.5 L29 7.5 L29 22 L14.5 21z" fill="#e8e8e0"/>
<path d="M15.5 10.5 L29 8.8 L29 20.8 L15.5 20z" fill="url(#trg)"/>
<rect x="7" y="14" width="2.2" height="13" fill="#c0c4c8"/>
<rect x="7.4" y="16" width="1.4" height="1.5" fill="#38d040"/>
</svg><div class="lb" style="top:14.96px;transform:scaleX(0.9938);">Troubleshooting</div></div>
<div class="it" style="left:765px;top:24px;"><svg class="a" style="left:4px;top:10px" width="32" height="32" viewBox="0 0 32 32">
<path d="M6.2 0.5 L31.5 2 L31 22.5 L6.5 21z" fill="#d9d9d2" stroke="#a8a8a0" stroke-width="0.6"/>
<defs><linearGradient id="cmsc" x1="0" y1="0" x2="1" y2="1"><stop offset="0" stop-color="#0010c0"/><stop offset="0.6" stop-color="#2a50d8"/><stop offset="1" stop-color="#6a9ae8"/></linearGradient></defs>
<path d="M7.5 1.5 L29.5 3 L29.5 20.8 L7.8 19.8z" fill="url(#cmsc)"/>
<path d="M20 22 L27 22.5 L29 27 L20 27z" fill="#e4e4e0"/>
<g transform="translate(12 4.5) scale(1.1)">
<defs><linearGradient id="cga" x1="0" y1="0" x2="1" y2="1"><stop offset="0" stop-color="#20f0ff"/><stop offset="0.45" stop-color="#40ff60"/><stop offset="1" stop-color="#ffff20"/></linearGradient>
<linearGradient id="csa" x1="0" y1="0" x2="0" y2="1"><stop offset="0" stop-color="#ff40ff"/><stop offset="1" stop-color="#ff2020"/></linearGradient></defs>
<path d="M0 2 C3 0.5 8 0.5 10 1.5 L10 10.5 C8 12 4 12.5 2 12 L0 11z" fill="url(#cga)"/>
<path d="M10 1.5 L12 2.5 L12 10 L10 10.5z" fill="url(#csa)"/>
</g>
<path d="M0.5 9 L12.5 9 L16.5 13 L16.5 30.8 L0.5 30.8z" fill="#fbfbfb" stroke="#8f9498" stroke-width="0.8"/>
<path d="M12.5 9 L12.5 13 L16.5 13" fill="#e8e8e8" stroke="#8f9498" stroke-width="0.6"/>
<g transform="translate(3 15.5) scale(0.95)">
<defs><linearGradient id="cgb" x1="0" y1="0" x2="1" y2="1"><stop offset="0" stop-color="#20f0ff"/><stop offset="0.45" stop-color="#40ff60"/><stop offset="1" stop-color="#ffff20"/></linearGradient>
<linearGradient id="csb" x1="0" y1="0" x2="0" y2="1"><stop offset="0" stop-color="#ff40ff"/><stop offset="1" stop-color="#ff2020"/></linearGradient></defs>
<path d="M0 2 C3 0.5 8 0.5 10 1.5 L10 10.5 C8 12 4 12.5 2 12 L0 11z" fill="url(#cgb)"/>
<path d="M10 1.5 L12 2.5 L12 10 L10 10.5z" fill="url(#csb)"/>
</g></svg><div class="lb" style="top:14.96px;transform:scaleX(0.9889);">Color Management</div></div>
<div class="it" style="left:765px;top:74px;"><svg class="a" style="left:4px;top:10px" width="32" height="32" viewBox="0 0 32 32">
<defs><linearGradient id="dl" x1="0" y1="0" x2="0" y2="1"><stop offset="0" stop-color="#3a5ad8"/><stop offset="1" stop-color="#2540b8"/></linearGradient>
<linearGradient id="dn" x1="0" y1="0" x2="1" y2="1"><stop offset="0" stop-color="#ffd84a"/><stop offset="1" stop-color="#e8a010"/></linearGradient></defs>
<rect x="1.8" y="5.7" width="22.5" height="20.3" rx="1.5" fill="url(#dl)"/>
<path d="M3 10 l2 -0.5 l1 0.8 l2 -1 l2 0.6 l2 -0.8 l2 0.6 l3 -0.4 l3 0.5 M3 20 l3 0.4 l2 -0.6 l3 0.5 l2 -0.3 l3 0.4" stroke="#8fa8f0" stroke-width="0.5" fill="none"/>
<path d="M1.8 17 L3 17 L4.5 9.5 L6 17 L7 14 L8 17.5 L9.5 15 L10.5 21 L12 16 L13.5 19 L15 15.5 L16.5 18.5 L18 12 L19.5 10 L21 16 L22.5 18.5 L24 16" stroke="#fff020" stroke-width="1.1" fill="none" stroke-linejoin="round"/>
<path d="M23.5 6.5 L25 6.5 L25 24 L23.5 24z" fill="#c89a30"/>
<path d="M24.5 6 C28 8 31 12 30.5 17.5 C29.5 15 28 13 25 11.5z" fill="url(#dn)" stroke="#a87010" stroke-width="0.5"/>
<ellipse cx="20.8" cy="23.6" rx="4.8" ry="3.2" fill="url(#dn)" stroke="#a87010" stroke-width="0.5" transform="rotate(-12 20.8 23.6)"/>
</svg><div class="lb" style="top:14.96px;transform:scaleX(1.0028);">Dell Audio</div></div>
<div class="it" style="left:765px;top:124px;"><svg class="a" style="left:4px;top:10px" width="32" height="32" viewBox="0 0 32 32">
<rect x="5.2" y="2.2" width="22.4" height="27.2" fill="#fbe08e" stroke="#e6bc48" stroke-width="0.9"/>
<path d="M8 3 V29" stroke="#fff2c0" stroke-width="0.8"/>
<rect x="14.3" y="4.4" width="15.3" height="11.2" fill="#fbfcfd" stroke="#7d8388" stroke-width="1"/>
<rect x="14.8" y="4.9" width="14.3" height="1.4" fill="#9aa0a5"/>
<path d="M17 9.3 l1 1 l2-2.4 M17 12.8 l1 1 l2-2.4" stroke="#2a8ae0" stroke-width="1.2" fill="none"/>
<path d="M22 9.2h6 M22 12.7h6" stroke="#b0b4b8" stroke-width="0.7"/>
<path d="M23 29.4 L23 19.5 L25.2 17 L27.6 19.5 L27.6 29.4z" fill="#f2cd60" stroke="#dcae3a" stroke-width="0.6"/>
</svg><div class="lb" style="top:14.96px;transform:scaleX(0.9682);">File Explorer Options</div></div>
<div class="it" style="left:765px;top:174px;"><svg class="a" style="left:4px;top:10px" width="32" height="32" viewBox="0 0 32 32">
<path d="M0.5 20.5 L18 14.5 L31 19.5 L31 23 L16 29 L0.5 24z" fill="#d5d8db" stroke="#8d9297" stroke-width="0.6"/>
<path d="M0.5 20.5 L16 25.5 L31 19.5 L31 23 L16 29 L0.5 24z" fill="#b3b8bc"/>
<path d="M4 22.5 L14 25.5 L14 27 L4 24z" fill="#d8d6e8"/>
<rect x="15.5" y="24" width="1.8" height="3" fill="#38d03a"/>
<circle cx="14.5" cy="12.2" r="7.3" fill="#d5e8f8" stroke="#7d8388" stroke-width="1.3"/>
<path d="M9.5 10 C11 7 15 6 18.5 8" stroke="#f4faff" stroke-width="1.2" fill="none"/>
<path d="M9 17 C11 18.5 16 18.5 19 16" stroke="#b8cde0" stroke-width="1" fill="none"/>
<path d="M10 18.5 L3.5 26.5" stroke="#7a8085" stroke-width="2.6" stroke-linecap="round"/>
<path d="M9.5 18.5 L3.5 26" stroke="#c8ccd0" stroke-width="0.9"/>
</svg><div class="lb" style="top:14.96px;transform:scaleX(0.9857);">Indexing Options</div></div>
<div class="it" style="left:765px;top:224px;"><svg class="a" style="left:4px;top:10px" width="32" height="32" viewBox="0 0 32 32">
<path d="M3 21 C2 17 8 13.5 18 13 C25 12.5 30 14.5 30 18 C30 22 26 26.5 16 27 C8 27.5 3.5 25 3 21z" fill="#3e454b"/>
<path d="M3 21 C2 17 8 13.5 18 13 C25 12.5 29 14 29 16.5 C29 19 24 23.5 15 24.5 C8 25 3.5 24 3 21z" fill="#a9b8c5" stroke="#5d666d" stroke-width="0.5"/>
<path d="M3.5 22 C8 25.5 20 25 29 17.5" stroke="#d9dee2" stroke-width="0.9" fill="none"/>
<path d="M8 19.5 C9 17 14 14.5 20 14.2 C17 16 12 19 8.5 20.5z" fill="#23282c"/>
<circle cx="20.5" cy="14.2" r="0.6" fill="#3ed04a"/>
</svg><div class="lb" style="top:14.96px;transform:scaleX(0.9915);">Mouse</div></div>
<div class="it" style="left:765px;top:274px;background:#e5f3ff;"><svg class="a" style="left:4px;top:10px" width="32" height="32" viewBox="0 0 32 32">
<path d="M8 7 L8 28.5 L27 28.5 L27 11z" fill="#eceef0"/>
<path d="M22.5 10.5 L27 11.5 L27 28.8 L22.5 28.8z" fill="#c0c4c8"/>
<path d="M8 4.5 L9.5 3 L28 8 L28.5 11 L26 11.5 L9 7.5z" fill="#d2d5d8" stroke="#8a8f93" stroke-width="0.5"/>
<path d="M8.2 6.8 L26 11.2" stroke="#404448" stroke-width="0.9"/>
<ellipse cx="14.5" cy="13.5" rx="4.5" ry="3" fill="#a8d0b0"/>
<ellipse cx="19.8" cy="17.5" rx="3.2" ry="4.6" fill="#f4a838"/>
<path d="M5 12 L19 15.5 L19.2 30 L5 26.5z" fill="#283440" stroke="#1a2028" stroke-width="0.6"/>
<ellipse cx="12.4" cy="21.2" rx="5.6" ry="6.2" fill="#d8dadc"/>
<ellipse cx="11.6" cy="20.4" rx="3" ry="3.5" fill="#eceeef"/>
<ellipse cx="12.4" cy="21.2" rx="1.1" ry="1.4" fill="#7a8088"/>
</svg><div class="lb" style="top:14.96px;transform:scaleX(0.9605);color:#13a013;text-decoration:underline;">Programs and Features</div></div>
<div class="it" style="left:765px;top:324px;"><svg class="a" style="left:4px;top:10px" width="32" height="32" viewBox="0 0 32 32">
<defs><linearGradient id="fl" x1="0" y1="0" x2="1" y2="0"><stop offset="0" stop-color="#1a2ab0"/><stop offset="0.45" stop-color="#5a80f0"/><stop offset="0.6" stop-color="#2a40c8"/><stop offset="1" stop-color="#3a5ae0"/></linearGradient></defs>
<path d="M3.7 7.5 C8 7 12 3 17.5 3.2 C20 3.5 22 6.5 25 7.5 C27.5 8.3 30 8 31.5 8 C29.5 11 28.5 15 26.5 17 C24.5 18 22 17.5 20 16.8 C16 17.5 12 20 8.2 21.6z" fill="url(#fl)" stroke="#2030a0" stroke-width="0.4"/>
<path d="M5.5 8.2 C9 7.5 13 4.5 17.5 4.3 M9 19.5 C12 18 16 16.5 19.5 15.5 M22 9 C25 10 28 10 30 9.5 C28.5 12 27.5 14.5 26 15.5" stroke="#a8c0ff" stroke-width="0.6" fill="none"/>
<path d="M1.8 3.6 L11.7 30.9" stroke="#6a6e72" stroke-width="2.4" stroke-linecap="round"/>
<path d="M1.8 3.6 L11.7 30.9" stroke="#e8eaec" stroke-width="1" stroke-dasharray="1.2 1"/>
<circle cx="1.9" cy="3.6" r="1.8" fill="#9a9ea2" stroke="#606468" stroke-width="0.5"/>
</svg><div class="lb" style="top:14.96px;transform:scaleX(0.9760);">Security and Maintenance</div></div>
<div class="it" style="left:765px;top:374px;"><svg class="a" style="left:4px;top:10px" width="32" height="32" viewBox="0 0 32 32">
<defs><radialGradient id="sy" cx="0.4" cy="0.3" r="0.75"><stop offset="0" stop-color="#66c860"/><stop offset="1" stop-color="#3aaa3a"/></radialGradient></defs>
<circle cx="16.1" cy="15.8" r="15" fill="url(#sy)"/>
<path d="M10.94 10.64 A7.3 7.3 0 0 1 23.4 15.8" stroke="#f4ec8a" stroke-width="3.6" fill="none"/>
<path d="M19 15.6 L28.9 16 L23.6 21z" fill="#fbe060"/>
<path d="M21.26 20.96 A7.3 7.3 0 0 1 8.8 15.8" stroke="#f4ec8a" stroke-width="3.6" fill="none"/>
<path d="M2.8 15.8 L13.2 15.8 L8 10.4z" fill="#fbe060"/>
</svg><div class="lb" style="top:14.96px;transform:scaleX(0.9494);">Sync Center</div></div>
<div class="it" style="left:765px;top:424px;"><svg class="a" style="left:4px;top:10px" width="32" height="32" viewBox="0 0 32 32">
<defs><linearGradient id="us1" x1="0" y1="0" x2="1" y2="1"><stop offset="0" stop-color="#f2dcc0"/><stop offset="1" stop-color="#d8a880"/></linearGradient>
<linearGradient id="us2" x1="0" y1="0" x2="1" y2="1"><stop offset="0" stop-color="#d8a070"/><stop offset="1" stop-color="#9a6030"/></linearGradient></defs>
<path d="M1 23.5 C1 17 5 14.5 8.5 14.3 C12 14.5 16 17 16 23.5 C12 24.5 5 24.5 1 23.5z" fill="#8cc470" stroke="#5a9040" stroke-width="0.5"/>
<path d="M7.5 15 L9.5 15 L9 23.5 L8 23.5z" fill="#e8f4f0"/>
<ellipse cx="8.8" cy="8.2" rx="4.6" ry="6" fill="url(#us1)"/>
<path d="M3.8 8 C3.5 3 7 1.3 10 1.5 C12.5 1.7 14.5 2.5 14.2 4.5 C12 3.8 8 4 6 6 C5.5 8 5.5 11 6.5 13.5 C4.5 12 4 10 3.8 8z" fill="#d8c070"/>
<path d="M13.6 29.5 C13 22 17 19 21.5 18.5 C27 19 30.8 22 30.5 29.5 C25 30.5 18 30.5 13.6 29.5z" fill="#9cc4ec" stroke="#5a88c0" stroke-width="0.5"/>
<path d="M19.5 19.5 L22 19.5 L21 28.5 L19.8 28.5z" fill="#f2f6fa"/>
<ellipse cx="19.6" cy="12.5" rx="4.8" ry="6.6" fill="url(#us2)"/>
<path d="M15 10 C14.5 5.5 18 4.5 20.5 4.7 C23.5 5 25 7 24.6 10.5 C24.5 12.5 24 14 23.5 15 C23 12 23 10 21.5 8.5 C19 8 17 8.5 15 10z" fill="#50555a"/>
</svg><div class="lb" style="top:14.96px;transform:scaleX(0.9618);">User Accounts</div></div>
</div>
<div id="tb"></div>
<svg class="a" style="left:16px;top:740px" width="16" height="16" viewBox="0 0 16 16"><path d="M0 2.3 L6.5 1.4 V7.4 H0z M7.6 1.25 L16 0 V7.4 H7.6z M0 8.6 H6.5 V14.6 L0 13.7z M7.6 8.6 H16 V16 L7.6 14.75z" fill="#000"/></svg>
<div class="a" style="left:48px;top:729px;width:344px;height:39px;background:#fff;border-right:1px solid #c6c6c6;border-left:1px solid #c6c6c6;border-bottom:1px solid #c6c6c6"></div>
<svg class="a" style="left:60px;top:740px" width="17" height="17" viewBox="0 0 17 17"><circle cx="10.5" cy="5.8" r="4.9" stroke="#000" stroke-width="1.2" fill="none"/><path d="M7 9.3 L1 15.5" stroke="#000" stroke-width="1.3"/></svg>
<div class="t" style="left:88px;top:738.81px;font-size:14.4px;line-height:20px;color:#000">Type here to search</div>
<svg class="a" style="left:407px;top:740px" width="17" height="16" viewBox="0 0 17 16"><circle cx="8.5" cy="8" r="6.3" stroke="#000" stroke-width="1.9" fill="none"/></svg>
<svg class="a" style="left:455px;top:739px" width="18" height="17" viewBox="0 0 18 17"><path d="M1.5 1 V3.5 H11.5 V1 M1.5 16 V13.5 H11.5 V16" stroke="#000" stroke-width="1" fill="none"/><rect x="1.5" y="5.5" width="10" height="5" stroke="#000" stroke-width="1" fill="none"/><path d="M15.5 1 V4 M15.5 8.5 V16" stroke="#000" stroke-width="1"/><rect x="14" y="5" width="3" height="2.6" fill="#000"/></svg>
<svg class="a" style="left:504px;top:737px" width="22" height="23" viewBox="0 0 22 23"><path fill-rule="evenodd" d="M1.1 10 C3 4.5 6.5 0.3 11 0.3 C17 0.3 20.8 4.5 20.8 10.5 V12.7 H7.2 C7.4 16.2 10 18.2 13.6 18.2 C15.6 18.2 17.5 17.5 18.8 16.5 V20.5 C17.2 21.4 15.2 21.8 12.8 21.8 C7.2 21.8 3.3 18.2 3.3 12.8 C3.3 10.5 4.3 8.3 6.3 6.8 C4.2 7.5 2.5 8.6 1.1 10 Z M7 9 H15 C14.8 6.8 13.3 5.4 11.2 5.4 C9.2 5.4 7.5 6.8 7 9 Z" fill="#0a76d8"/><path d="M2.5 9.6 C4.5 7.2 7 5.6 9.5 5.2" stroke="#d0e3ec" stroke-width="0.8" fill="none"/></svg>
<svg class="a" style="left:553px;top:738px" width="22" height="20" viewBox="0 0 22 20"><defs><linearGradient id="exg" x1="0" y1="0" x2="0" y2="1"><stop offset="0" stop-color="#ffd970"/><stop offset="1" stop-color="#f8c850"/></linearGradient></defs><rect x="0.2" y="1" width="9.8" height="3" rx="1" fill="#e0a010"/><rect x="0.2" y="2.2" width="20.9" height="15.5" fill="url(#exg)"/><path d="M4.2 18.6 V12.6 C4.2 11.6 5 10.9 6 10.9 H16 C17 10.9 17.8 11.6 17.8 12.6 V18.6 H14.3 V14.3 H7.7 V18.6z" fill="#3a8ee0"/></svg>
<svg class="a" style="left:600px;top:735px" width="25" height="25" viewBox="0 0 25 25"><path d="M8.6 7 V4.5 C8.6 2.3 10.5 1 13.4 1 C16.3 1 18.4 2.3 18.4 4.5 V7" stroke="#000" stroke-width="1.1" fill="none"/><path d="M10.6 7 V5 C10.6 3.5 12 2.6 13.4 2.6 C14.8 2.6 16.4 3.5 16.4 5 V7" stroke="#000" stroke-width="0.9" fill="none"/><rect x="1" y="6.8" width="23" height="17.2" rx="0.8" fill="#000"/><rect x="6.9" y="9.9" width="5.1" height="5.2" fill="#f35325"/><rect x="12.9" y="9.9" width="5.2" height="5.2" fill="#81bc06"/><rect x="6.9" y="16" width="5.1" height="5.1" fill="#05a6f0"/><rect x="12.9" y="16" width="5.2" height="5.1" fill="#ffba08"/></svg>
<svg class="a" style="left:650px;top:737px" width="25" height="21" viewBox="0 0 25 21"><path d="M0 6 L12.3 0 L24.5 6 V20.5 H0z" fill="#3c3f41"/><path d="M1 6.5 H23.5 L14 11.5 L19 16 L12 12.5z" fill="#d4e4ec"/></svg>
<div class="a" style="left:687px;top:728px;width:48px;height:40px;background:#e8f0f5"></div>
<div class="a" style="left:687px;top:766px;width:48px;height:2px;background:#0a74d4"></div>
<svg class="a" style="left:700px;top:740px" width="22" height="16" viewBox="0 0 22 16">
<defs><linearGradient id="cpb" x1="0" y1="0" x2="1" y2="1"><stop offset="0" stop-color="#a8e0fc"/><stop offset="1" stop-color="#6cc4f6"/></linearGradient></defs>
<rect x="0.5" y="0.5" width="21" height="15" rx="1" fill="url(#cpb)" stroke="#2a7cc8"/>
<circle cx="6.7" cy="6" r="3.9" fill="#e8f6fe"/>
<circle cx="6.7" cy="6" r="3.2" fill="#1a78d0"/>
<path d="M6.7 6 L6.7 2.8 A3.2 3.2 0 0 1 9.9 6z" fill="#f8b820"/>
<path d="M10.6 6.5 L12 6.5 L13 4.5 L14.2 4.5" stroke="#1a78d0" stroke-width="0.8" fill="none"/>
<rect x="14.2" y="2.8" width="4.6" height="6.7" fill="#2a8ad8"/>
<rect x="15" y="3.6" width="3" height="1.1" fill="#e8f6fe"/><rect x="15" y="5.6" width="3" height="1.1" fill="#e8f6fe"/><rect x="15" y="7.6" width="3" height="1.1" fill="#e8f6fe"/>
<circle cx="17.9" cy="4.1" r="0.6" fill="#f89820"/>
<rect x="2.9" y="12" width="6.7" height="1" fill="#f0a020"/><rect x="9.6" y="11.6" width="2" height="1.8" fill="#fff"/><rect x="12" y="12" width="6" height="1" fill="#1a70d0"/>
</svg>
<svg class="a" style="left:1158px;top:742px" width="14" height="10" viewBox="0 0 14 10"><path d="M1 8.5 L7 2.5 L13 8.5" stroke="#000" stroke-width="1.2" fill="none"/></svg>
<svg class="a" style="left:1180px;top:741px" width="18" height="13" viewBox="0 0 18 13"><path d="M1.5 0.5 V3 M4.5 0.5 V3" stroke="#000" stroke-width="1"/><path d="M0.8 3 H5.2 V5 C5.2 6.3 4.2 7.3 3 7.3 C1.8 7.3 0.8 6.3 0.8 5z" stroke="#000" stroke-width="1" fill="none"/><path d="M3 7.3 V12" stroke="#000" stroke-width="1"/><rect x="5.8" y="2.8" width="10.2" height="8.4" stroke="#000" stroke-width="1.1" fill="none"/><rect x="5.8" y="4.2" width="8.8" height="5.6" fill="#000"/><rect x="16" y="5" width="1.4" height="4" fill="#000"/></svg>
<svg class="a" style="left:1206px;top:742px" width="15" height="14" viewBox="0 0 15 14"><path d="M1.8 13.2 A10.5 10.5 0 0 1 12.3 2.5 M4.8 13.2 A7.5 7.5 0 0 1 12.3 5.5 M7.8 13.2 A4.5 4.5 0 0 1 12.3 8.5" stroke="#000" stroke-width="1.15" fill="none"/><circle cx="12.4" cy="12.2" r="1.35" fill="#000"/></svg>
<svg class="a" style="left:1228px;top:741px" width="17" height="15" viewBox="0 0 17 15"><path d="M0.9 5 H3.2 L7 1.2 V13.8 L3.2 10 H0.9z" stroke="#000" stroke-width="1.1" fill="none"/><path d="M9.8 5 L14.5 9.7 M14.5 5 L9.8 9.7" stroke="#000" stroke-width="1.1"/></svg>
<div class="t" style="left:1256px;top:728px;width:52px;text-align:center;font-size:11.3px;line-height:16px;color:#000;top:731.08px">1:11 PM</div>
<div class="t" style="left:1256px;width:52px;text-align:center;font-size:11.4px;line-height:16px;color:#000;top:749.05px">7/16/2019</div>
<svg class="a" style="left:1323px;top:738px" width="28" height="24" viewBox="0 0 28 24"><path d="M2 2 H18 V14 H10 L6 18 V14 H2z" fill="#000"/><path d="M5 6 H15 M5 9 H15 M5 12 H12" stroke="#d3e2ea" stroke-width="1"/><circle cx="18" cy="17.5" r="7" fill="#d5d5d5" stroke="#8a8a8a" stroke-width="1"/><text x="18" y="21.5" font-family="Liberation Sans" font-size="11" text-anchor="middle" fill="#000">2</text></svg>
<div class="a" style="left:1361px;top:728px;width:1px;height:40px;background:#aab8c0"></div>
</body></html>
